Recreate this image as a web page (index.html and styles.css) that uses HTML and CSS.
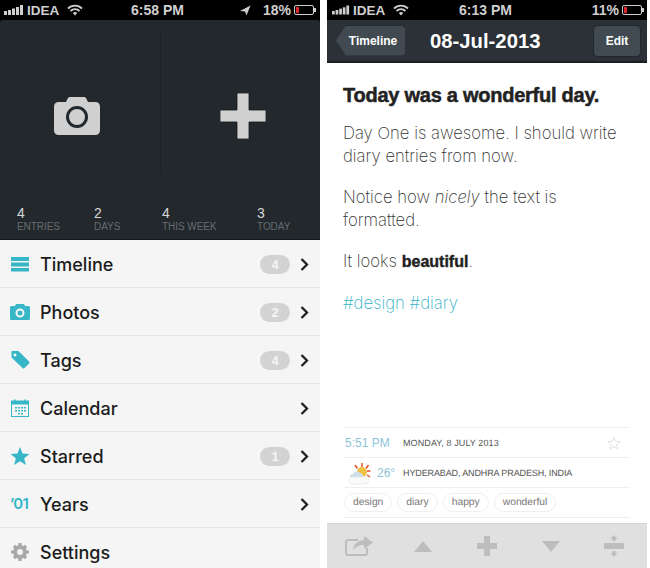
FILE: index.html
```html
<!DOCTYPE html>
<html lang="en">
<head>
<meta charset="utf-8">
<title>Day One</title>
<link rel="stylesheet" href="styles.css">
</head>
<body>
<main class="screens">
  <section class="phone">
    <div class="status">
      <div class="status-left">
        <svg class="signal" viewBox="0 0 20 10"><rect x="0" y="6" width="3" height="4"/><rect x="4" y="5" width="3" height="5"/><rect x="8" y="3.500" width="3" height="6.500"/><rect x="12" y="2" width="3" height="8"/><rect x="16" y="0" width="3" height="10"/></svg>
        <span>IDEA</span>
        <svg class="wifi" viewBox="0 0 16 12"><path d="M1 4.500a10 10 0 0 1 14 0M3.500 7a6.500 6.500 0 0 1 9 0" fill="none" stroke="currentColor" stroke-width="1.800"/><path d="M5.800 9a3.200 3.200 0 0 1 4.400 0L8 11.500z" fill="currentColor"/></svg>
      </div>
      <div class="status-time">6:58 PM</div>
      <div class="status-right">
        <svg class="arrow" viewBox="0 0 12 12"><path d="M0 6.500 11.500 0.500 7 11.500 5.500 7z" fill="currentColor"/></svg>
        <span class="pct-a">18%</span>
        <div class="battery"><i class="level-a"></i></div>
      </div>
    </div>

    <div class="panel">
      <div class="actions">
        <div class="action">
          <svg class="cam-big" viewBox="0 0 46 38"><path d="M5 5h7l2-4q.5-1 2-1h14q1.500 0 2 1l2 4h7q5 0 5 5v23q0 5-5 5H5q-5 0-5-5V10q0-5 5-5z" fill="#d0d0d0"/><circle cx="23" cy="20" r="9.500" fill="#d0d0d0" stroke="#22282c" stroke-width="3"/></svg>
        </div>
        <div class="action action-right">
          <svg class="plus-big" viewBox="0 0 46 46"><path d="M17 0h12v17h17v12H29v17H17V29H0V17h17z" fill="#d0d0d0" stroke="#14181a" stroke-width=".8"/></svg>
        </div>
      </div>
      <div class="stats">
        <div class="stat stat-a"><b>4</b><span>ENTRIES</span></div>
        <div class="stat stat-b"><b>2</b><span>DAYS</span></div>
        <div class="stat stat-c"><b>4</b><span>THIS WEEK</span></div>
        <div class="stat stat-d"><b>3</b><span>TODAY</span></div>
      </div>
    </div>

    <ul class="menu">
      <li class="row">
        <svg class="ico" viewBox="0 0 20 16"><path d="M1 1h18v4H1zM1 6.500h18v4H1zM1 12h18v3.500H1z" fill="#36b6c6"/></svg>
        <span class="label">Timeline</span><span class="badge">4</span>
        <svg class="chev" viewBox="0 0 9 13"><path d="M1.500 1 7 6.500 1.500 12" fill="none" stroke="#1c1c1c" stroke-width="2.200"/></svg>
      </li>
      <li class="row">
        <svg class="ico" viewBox="0 0 20 16"><path d="M1.500 2H5l1-2h8l1 2h3.500q1.500 0 1.500 1.500v11q0 1.500-1.500 1.500h-17Q0 16 0 14.500v-11Q0 2 1.500 2z" fill="#36b6c6"/><circle cx="10" cy="9" r="3.500" fill="#36b6c6" stroke="#f5f5f5" stroke-width="2"/></svg>
        <span class="label">Photos</span><span class="badge">2</span>
        <svg class="chev" viewBox="0 0 9 13"><path d="M1.500 1 7 6.500 1.500 12" fill="none" stroke="#1c1c1c" stroke-width="2.200"/></svg>
      </li>
      <li class="row">
        <svg class="ico" viewBox="0 0 20 18"><path fill-rule="evenodd" d="M2 0h6.500l10.500 10.500q1 1 0 2l-4.500 4.500q-1 1-2 0L1.500 6.500V1q0-1 .5-1zM5 2.500a1.500 1.500 0 1 0 .01 0z" fill="#36b6c6"/></svg>
        <span class="label">Tags</span><span class="badge">4</span>
        <svg class="chev" viewBox="0 0 9 13"><path d="M1.500 1 7 6.500 1.500 12" fill="none" stroke="#1c1c1c" stroke-width="2.200"/></svg>
      </li>
      <li class="row">
        <svg class="ico" viewBox="0 0 20 18"><rect x="1.500" y="2" width="17" height="15.500" fill="none" stroke="#36b6c6"/><path d="M1.500 2h17v3.500h-17z" fill="#36b6c6"/><path d="M5 .5v3M15 .5v3" stroke="#36b6c6" stroke-width="1.500"/><path d="M5 8h2v1.500H5zM8 8h2v1.500H8zM11 8h2v1.500h-2zM14 8h2v1.500h-2zM5 11h2v1.500H5zM8 11h2v1.500H8zM11 11h2v1.500h-2zM14 11h2v1.500h-2zM8 14h2v1.500H8zM11 14h2v1.500h-2z" fill="#36b6c6"/></svg>
        <span class="label">Calendar</span>
        <svg class="chev chev-solo" viewBox="0 0 9 13"><path d="M1.500 1 7 6.500 1.500 12" fill="none" stroke="#1c1c1c" stroke-width="2.200"/></svg>
      </li>
      <li class="row">
        <svg class="ico" viewBox="0 0 20 19"><path d="M10 0l2.700 6.800 7.300.5-5.600 4.600L16.200 19 10 15.100 3.800 19l1.800-7.100L0 7.300l7.300-.5z" fill="#36b6c6"/></svg>
        <span class="label">Starred</span><span class="badge">1</span>
        <svg class="chev" viewBox="0 0 9 13"><path d="M1.500 1 7 6.500 1.500 12" fill="none" stroke="#1c1c1c" stroke-width="2.200"/></svg>
      </li>
      <li class="row">
        <span class="ico ico-text">’01</span>
        <span class="label">Years</span>
        <svg class="chev chev-solo" viewBox="0 0 9 13"><path d="M1.500 1 7 6.500 1.500 12" fill="none" stroke="#1c1c1c" stroke-width="2.200"/></svg>
      </li>
      <li class="row">
        <svg class="ico" viewBox="0 0 20 20"><circle cx="10" cy="10" r="5.500" fill="none" stroke="#a8a8a8" stroke-width="4.500"/><path d="M8.200 0h3.600v3H8.200zM8.200 17h3.600v3H8.200zM0 8.200h3v3.600H0zM17 8.200h3v3.600h-3zM2 4.500 4.500 2l2 2L4 6.500zM15.500 2 18 4.500l-2 2L13.500 4zM2 15.500 4 13.500 6.500 16l-2 2zM13.500 16l2.500-2.500 2 2L15.500 18z" fill="#a8a8a8"/></svg>
        <span class="label">Settings</span>
      </li>
    </ul>
  </section>

  <section class="phone phone-entry">
    <div class="status status-small">
      <div class="status-left">
        <svg class="signal signal-small" viewBox="0 0 20 10"><rect x="0" y="6" width="3" height="4"/><rect x="4" y="5" width="3" height="5"/><rect x="8" y="3.500" width="3" height="6.500"/><rect x="12" y="2" width="3" height="8"/><rect x="16" y="0" width="3" height="10"/></svg>
        <span>IDEA</span>
        <svg class="wifi" viewBox="0 0 16 12"><path d="M1 4.500a10 10 0 0 1 14 0M3.500 7a6.500 6.500 0 0 1 9 0" fill="none" stroke="currentColor" stroke-width="1.800"/><path d="M5.800 9a3.200 3.200 0 0 1 4.400 0L8 11.500z" fill="currentColor"/></svg>
      </div>
      <div class="status-time">6:13 PM</div>
      <div class="status-right">
        <span class="pct-b">11%</span>
        <div class="battery"><i class="level-b"></i></div>
      </div>
    </div>
    <header class="navbar">
      <div class="btn btn-back"><span>Timeline</span></div>
      <h1 class="nav-title">08-Jul-2013</h1>
      <div class="btn btn-edit">Edit</div>
    </header>
    <article class="entry">
      <h2 class="entry-head">Today was a wonderful day.</h2>
      <p>Day One is awesome. I should write diary entries from now.</p>
      <p>Notice how <em>nicely</em> the text is formatted.</p>
      <p>It looks <strong>beautiful</strong>.</p>
      <p class="hash">#design #diary</p>
    </article>
    <div class="meta">
      <div class="meta-row">
        <span class="time">5:51 PM</span>
        <span class="meta-text meta-date">MONDAY, 8 JULY 2013</span>
        <svg class="star" viewBox="0 0 14 14"><path d="M7 1l1.700 4.300 4.500.3-3.500 2.900 1.200 4.500L7 10.500 3.100 13l1.200-4.500L.8 5.600l4.500-.3z" fill="none" stroke="#dcdcdc" stroke-width=".8"/></svg>
      </div>
      <div class="meta-row">
        <svg class="weather" viewBox="0 0 24 24"><g stroke="#e8502a" stroke-width="1.500"><path d="M15 2v4M8 4l2.500 3.500M21.500 4 19 7.500M23.500 10H20M23 16l-3-2"/></g><circle cx="15" cy="11" r="5" fill="#f2c043"/><path d="M6 13a4 4 0 0 1 7-1 3 3 0 0 1 3 4H3a3 3 0 0 1 3-3z" fill="#cfe0e8"/><path d="M5 16h13a3.500 3.500 0 0 1 0 7H6a3.500 3.500 0 0 1-1-7z" fill="#fbfbfb" stroke="#dfe3e5" stroke-width=".7"/></svg>
        <span class="temp">26°</span>
        <span class="meta-text meta-place">HYDERABAD, ANDHRA PRADESH, INDIA</span>
      </div>
      <div class="tags">
        <span class="tag">design</span>
        <span class="tag">diary</span>
        <span class="tag">happy</span>
        <span class="tag">wonderful</span>
      </div>
    </div>
    <footer class="toolbar">
      <svg class="tool tool-share" viewBox="0 0 28 20"><path d="M13 4H3q-2 0-2 2v11q0 2 2 2h17q2 0 2-2v-5" fill="none" stroke="#bdbdbd" stroke-width="2"/><path d="M19 0l9 6.500-9 6.500V9q-7 0-11 5 1-9 11-10z" fill="#bdbdbd"/></svg>
      <svg class="tool tool-up" viewBox="0 0 18 11"><path d="M9 0l9 11H0z" fill="#bdbdbd"/></svg>
      <svg class="tool tool-plus" viewBox="0 0 20 20"><path d="M7 0h6v7h7v6h-7v7H7v-7H0V7h7z" fill="#bdbdbd"/></svg>
      <svg class="tool tool-down" viewBox="0 0 18 11"><path d="M0 0h18L9 11z" fill="#bdbdbd"/></svg>
      <svg class="tool tool-split" viewBox="0 0 20 24"><path d="M0 9h20v6H0z" fill="#bdbdbd"/><path d="M10 1l3.500 4h-2v2h-3V5h-2zM10 23l3.500-4h-2v-2h-3v2h-2z" fill="#bdbdbd"/></svg>
    </footer>
  </section>
</main>
</body>
</html>
```
FILE: styles.css
```css
* { box-sizing: border-box; }
html, body { margin: 0; padding: 0; background: #fff; }
body { width: 650px; height: 568px; overflow: hidden; font-family: "Liberation Sans", Arial, sans-serif; }
svg { display: block; flex: none; }

.screens { display: flex; gap: 7px; height: 568px; }
.phone { width: 320px; height: 568px; display: flex; flex-direction: column; overflow: hidden; flex: none; background: #000; }
.phone-entry { width: 320px; background: #fff; }

.status { height: 20px; flex: none; background: #000; color: #cfcfcf; display: grid; grid-template-columns: 1fr auto 1fr; align-items: center; padding: 0 4px; font-size: 14px; font-weight: 700; }
.status-left { display: flex; align-items: center; gap: 3px; font-size: 13.5px; }
.status-right { display: flex; align-items: center; justify-content: flex-end; gap: 3px; }
.status-time { font-size: 14px; padding-right: 5px; }
.signal { width: 20px; height: 10px; fill: #cfcfcf; }
.signal-small { width: 18px; }
.wifi { width: 16px; height: 12px; margin-left: 5px; }
.arrow { width: 11px; height: 11px; margin-right: 9px; }
.battery { width: 20px; height: 10px; border: 1px solid #cfcfcf; border-radius: 2px; padding: 1px; position: relative; margin-right: 2px; }
.battery::after { content: ""; position: absolute; right: -3px; top: 2px; width: 2px; height: 4px; background: #cfcfcf; }
.level-a, .level-b { display: block; width: 3px; height: 6px; background: #e0242c; }
.status-small { padding: 0 3px 0 5px; }

.panel { height: 220px; flex: none; background: #22282c; border-radius: 3px 3px 0 0; display: flex; flex-direction: column; border-bottom: 1px solid #14181a; }
.actions { flex: none; height: 153px; padding-top: 13px; display: flex; }
.action { width: 160px; height: 140px; display: flex; align-items: center; justify-content: center; padding: 26px 6px 0 0; }
.action-right { border-left: 1px solid #1b2024; padding: 26px 0 0 5px; }
.cam-big { width: 46px; height: 38px; }
.plus-big { width: 46px; height: 46px; }
.stats { display: flex; padding-top: 34px; }
.stat { display: flex; flex-direction: column; }
.stat b { font-size: 14px; line-height: 13px; font-weight: 400; color: #d8d8d8; }
.stat span { font-size: 10px; line-height: 14px; letter-spacing: -.05px; color: #666c70; }
.stat-a { margin-left: 17px; width: 77px; }
.stat-b { width: 68px; }
.stat-c { width: 95px; }
.stat-d { flex: 1; }

.menu { list-style: none; margin: 0; padding: 0; background: #f5f5f5; flex: none; }
.row { height: 48px; display: flex; align-items: center; padding: 1px 0 0 10px; border-bottom: 1px solid #e4e4e4; }
.ico { width: 20px; height: 18px; margin-right: 10px; }
.ico-text { font-family: Inter, sans-serif; font-size: 15px; font-weight: 600; color: #36b6c6; line-height: 18px; white-space: nowrap; letter-spacing: -.5px; }
.label { flex: 1; font-family: Inter, "Liberation Sans", sans-serif; font-size: 18px; font-weight: 500; color: #1c1c1c; }
.badge { width: 30px; height: 19px; border-radius: 10px; background: #d2d3d2; color: #f5f5f5; font-size: 13px; font-weight: 700; text-align: center; line-height: 19px; margin-right: 10px; }
.chev { width: 9px; height: 13px; margin-right: 11px; }

.navbar { height: 43px; flex: none; background: #2b3136; display: flex; align-items: center; position: relative; border-bottom: 2px solid #1b1f22; padding: 0 7px 0 9px; }
.btn { height: 30px; background: #414a51; color: #fff; font-size: 12px; font-weight: 700; display: flex; align-items: center; justify-content: center; border-radius: 4px; box-shadow: 0 0 0 1px #22272a; }
.btn-back { width: 69px; padding-left: 5px; border-radius: 2px 4px 4px 2px; clip-path: polygon(0 50%, 10px 0, 100% 0, 100% 100%, 10px 100%); }
.btn-edit { width: 46px; margin-left: auto; }
.nav-title { position: absolute; left: 103px; top: 9px; margin: 0; color: #fff; font-size: 20.300px; line-height: 24px; font-weight: 700; }

.entry { flex: 1; padding: 20px 26px 0 16px; color: #333; font-family: Inter, sans-serif; font-weight: 200; font-size: 16.700px; line-height: 23px; min-height: 0; }
.entry p { margin: 0 0 18px; }
.entry-head { margin: 0 0 15px; font-family: "Liberation Sans", sans-serif; font-weight: 700; font-size: 20px; line-height: 24px; letter-spacing: -.25px; -webkit-text-stroke: .5px #222; color: #222; white-space: nowrap; }
.entry strong { font-family: "Liberation Sans", sans-serif; font-weight: 700; font-size: 16px; -webkit-text-stroke: .4px #222; color: #222; }
.entry .hash { color: #36b3c8; margin-top: 19px; }

.meta { flex: none; margin: 0 17px 5px; border-top: 1px solid #efefef; }
.meta-row { height: 30px; display: flex; align-items: center; border-bottom: 1px solid #efefef; }
.time { font-size: 12px; color: #8ec5d6; width: 59px; padding-left: 1px; }
.temp { font-size: 12px; color: #8ec5d6; width: 26px; margin-left: 6px; }
.meta-text { font-size: 9px; color: #555; flex: 1; text-rendering: geometricPrecision; }
.meta-date { letter-spacing: .1px; }
.meta-place { letter-spacing: -.12px; }
.star { width: 14px; height: 14px; margin-right: 9px; }
.weather { width: 24px; height: 24px; margin-left: 3px; }
.tags { height: 30px; display: flex; align-items: center; gap: 5px; border-bottom: 1px solid #efefef; }
.tag { height: 19px; padding: 0 8px; border: 1px solid #efefef; border-radius: 10px; font-size: 10.300px; line-height: 17px; color: #777; text-rendering: geometricPrecision; }

.toolbar { height: 45px; flex: none; background: #e0e0e0; border-top: 1px solid #d4d4d4; display: flex; align-items: center; padding: 0 0 0 18px; }
.tool-share { width: 28px; height: 20px; }
.tool-up { width: 18px; height: 11px; margin-left: 41px; }
.tool-plus { width: 20px; height: 20px; margin-left: 45px; }
.tool-down { width: 18px; height: 11px; margin-left: 45px; }
.tool-split { width: 20px; height: 24px; margin-left: 44px; }
```
